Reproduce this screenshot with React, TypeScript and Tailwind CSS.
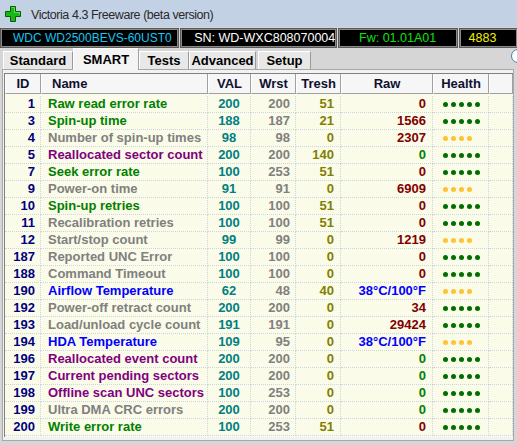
import React from "react";

type Row = {
  id: number;
  name: string;
  nc: string;
  val: number;
  wrst: number;
  tresh: number;
  raw: string;
  rc: string;
  h: 5 | 4;
};

const G = "text-[#008000]";
const GR = "text-[#808080]";
const P = "text-[#800080]";
const B = "text-[#0000ff]";
const M = "text-[#800000]";

const rows: Row[] = [
  { id: 1, name: "Raw read error rate", nc: G, val: 200, wrst: 200, tresh: 51, raw: "0", rc: M, h: 5 },
  { id: 3, name: "Spin-up time", nc: G, val: 188, wrst: 187, tresh: 21, raw: "1566", rc: M, h: 5 },
  { id: 4, name: "Number of spin-up times", nc: GR, val: 98, wrst: 98, tresh: 0, raw: "2307", rc: M, h: 4 },
  { id: 5, name: "Reallocated sector count", nc: P, val: 200, wrst: 200, tresh: 140, raw: "0", rc: G, h: 5 },
  { id: 7, name: "Seek error rate", nc: G, val: 100, wrst: 253, tresh: 51, raw: "0", rc: M, h: 5 },
  { id: 9, name: "Power-on time", nc: GR, val: 91, wrst: 91, tresh: 0, raw: "6909", rc: M, h: 4 },
  { id: 10, name: "Spin-up retries", nc: G, val: 100, wrst: 100, tresh: 51, raw: "0", rc: M, h: 5 },
  { id: 11, name: "Recalibration retries", nc: GR, val: 100, wrst: 100, tresh: 51, raw: "0", rc: M, h: 5 },
  { id: 12, name: "Start/stop count", nc: GR, val: 99, wrst: 99, tresh: 0, raw: "1219", rc: M, h: 4 },
  { id: 187, name: "Reported UNC Error", nc: GR, val: 100, wrst: 100, tresh: 0, raw: "0", rc: M, h: 5 },
  { id: 188, name: "Command Timeout", nc: GR, val: 100, wrst: 100, tresh: 0, raw: "0", rc: M, h: 5 },
  { id: 190, name: "Airflow Temperature", nc: B, val: 62, wrst: 48, tresh: 40, raw: "38°C/100°F", rc: B, h: 4 },
  { id: 192, name: "Power-off retract count", nc: GR, val: 200, wrst: 200, tresh: 0, raw: "34", rc: M, h: 5 },
  { id: 193, name: "Load/unload cycle count", nc: GR, val: 191, wrst: 191, tresh: 0, raw: "29424", rc: M, h: 5 },
  { id: 194, name: "HDA Temperature", nc: B, val: 109, wrst: 95, tresh: 0, raw: "38°C/100°F", rc: B, h: 4 },
  { id: 196, name: "Reallocated event count", nc: P, val: 200, wrst: 200, tresh: 0, raw: "0", rc: G, h: 5 },
  { id: 197, name: "Current pending sectors", nc: P, val: 200, wrst: 200, tresh: 0, raw: "0", rc: G, h: 5 },
  { id: 198, name: "Offline scan UNC sectors", nc: P, val: 100, wrst: 253, tresh: 0, raw: "0", rc: G, h: 5 },
  { id: 199, name: "Ultra DMA CRC errors", nc: GR, val: 200, wrst: 200, tresh: 0, raw: "0", rc: G, h: 5 },
  { id: 200, name: "Write error rate", nc: G, val: 100, wrst: 253, tresh: 51, raw: "0", rc: M, h: 5 },
];

const cols = "grid grid-cols-[36px_167px_43px_45px_45px_92px_56px_1fr]";
const cell = "border-r border-b border-dotted border-[#c9d6e2] h-[17px] flex items-center";

function Health({ n }: { n: 5 | 4 }) {
  const c = n === 5 ? "bg-[#006e00]" : "bg-[#ffc233]";
  return (
    <div className="flex gap-[3px] pl-[10px]">
      {Array.from({ length: n }).map((_, i) => (
        <span key={i} className={`w-[5px] h-[5px] rounded-full ${c}`} />
      ))}
    </div>
  );
}

function Tab({ label, active, w }: { label: string; active?: boolean; w: string }) {
  if (active) {
    return (
      <div
        className={`${w} h-[22px] -mb-[1px] relative z-10 flex items-center justify-center bg-[#f4f4f4] border-t border-l border-white border-r border-r-[#a0a0a0] text-black`}
      >
        {label}
      </div>
    );
  }
  return (
    <div
      className={`${w} h-[18px] flex items-center justify-center bg-[#e8e8e8] border-t border-l border-white border-r border-r-[#9a9a9a] text-black`}
    >
      {label}
    </div>
  );
}

const box =
  "bg-black border border-[#8a8a8a] outline outline-1 outline-[#5a5a5a] flex items-center whitespace-nowrap overflow-hidden";

export default function App() {
  return (
    <div
      className="w-[517px] h-[445px] overflow-hidden bg-[#d6d6d6] relative"
      style={{ fontFamily: '"Liberation Sans", Arial, sans-serif' }}
    >
      {/* title bar */}
      <div className="h-[27px] bg-[#c3d1e5] flex items-center">
        <svg className="ml-[5px]" width="16" height="16" viewBox="0 0 16 16">
          <path
            d="M5.5 0.5h5v5h5v5h-5v5h-5v-5h-5v-5h5z"
            fill="#18b818"
            stroke="#0a5a0a"
            strokeWidth="1"
          />
          <path d="M6.5 1.5h3v5h5v2" fill="none" stroke="#5ee05e" strokeWidth="1" />
        </svg>
        <span className="ml-[10px] mt-[3px] text-[12.5px] tracking-[-0.45px] text-[#2a2a2a] leading-none">
          Victoria 4.3 Freeware (beta version)
        </span>
      </div>

      {/* info bar */}
      <div className="mt-[2px] h-[18px] flex text-[12.5px] leading-none">
        <div className={`ml-[1px] w-[186px] pl-[11px] text-[12px] text-[#19c6ef] ${box}`}>WDC WD2500BEVS-60UST0</div>
        <div className={`ml-[3px] w-[162px] pl-[12px] text-white ${box}`}>SN: WD-WXC808070004</div>
        <div className={`ml-[3px] w-[124px] justify-center text-[#10e010] ${box}`}>Fw: 01.01A01</div>
        <div className={`ml-[3px] w-[60px] pl-[8px] text-[#f0f000] ${box}`}>4883</div>
      </div>

      {/* tabs */}
      <div className="h-[22px] flex items-end pl-[3px] text-[13px] font-bold relative">
        <Tab label="Standard" w="w-[70px]" />
        <Tab label="SMART" active w="w-[66px]" />
        <Tab label="Tests" w="w-[50px]" />
        <Tab label="Advanced" w="w-[67px]" />
        <div className="w-[2px]" />
        <Tab label="Setup" w="w-[53px]" />
        <div className="absolute left-[511px] top-[2px] w-[14px] h-[14px] rounded-full border border-[#4a7fb0] bg-white" />
      </div>

      {/* table frame */}
      <div className="ml-[2px] mr-[3px] h-[372px] border border-[#a8a8a8] bg-[#f2f2f2] pt-[3px] pl-[1px]">
        <div className="h-[364px] border-l border-t border-[#808080] bg-[#fbfbe9] font-bold text-[13px]">
          {/* header */}
          <div className={`${cols} h-[20px] bg-[#f6f6f6] text-[#101030]`}>
            {["ID", "Name", "VAL", "Wrst", "Tresh", "Raw", "Health", ""].map((h, i) => (
              <div
                key={i}
                className={`border-r border-b border-r-[#a0a0a0] border-b-[#a0a0a0] border-l border-l-white h-[20px] flex items-center ${
                  i === 1 ? "pl-[10px]" : "justify-center"
                }`}
              >
                {h}
              </div>
            ))}
          </div>
          <div className="h-[2px]" />
          {rows.map((r) => (
            <div key={r.id} className={cols}>
              <div className={`${cell} justify-end pr-[5px] text-[#000080]`}>{r.id}</div>
              <div className={`${cell} pl-[7px] ${r.nc} whitespace-nowrap`}>{r.name}</div>
              <div className={`${cell} justify-center text-[#008080]`}>{r.val}</div>
              <div className={`${cell} justify-end pr-[5px] text-[#808080]`}>{r.wrst}</div>
              <div className={`${cell} justify-end pr-[6px] text-[#808000]`}>{r.tresh}</div>
              <div className={`${cell} justify-end pr-[6px] ${r.rc}`}>{r.raw}</div>
              <div className={cell}>
                <Health n={r.h} />
              </div>
              <div className={cell} />
            </div>
          ))}
        </div>
      </div>
    </div>
  );
}
